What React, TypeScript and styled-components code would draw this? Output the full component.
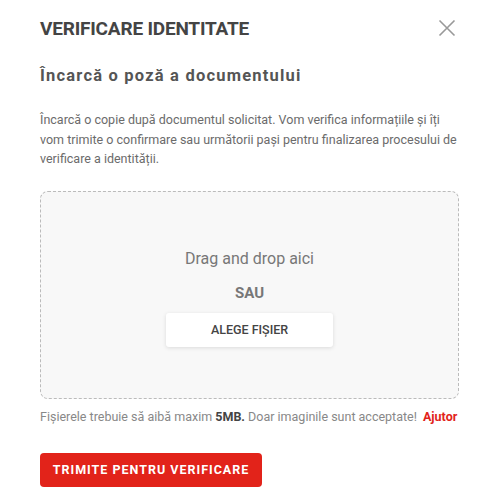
import React from 'react';
import styled, { createGlobalStyle } from 'styled-components';

const Global = createGlobalStyle`
  body {
    margin: 0;
    background: #fff;
    font-family: Roboto, "Liberation Sans", sans-serif;
  }
`;

const Modal = styled.div`
  width: 500px;
  height: 500px;
  box-sizing: border-box;
  padding: 16px 41px 0 40px;
  display: flex;
  flex-direction: column;
`;

const Header = styled.div`
  display: flex;
  align-items: center;
  justify-content: space-between;
  height: 24px;
`;

const Title = styled.h1`
  margin: 0;
  font-size: 19px;
  font-weight: 700;
  color: #444;
  letter-spacing: -0.2px;
`;

const Close = styled.button`
  border: 0;
  background: none;
  padding: 0;
  width: 18px;
  height: 18px;
  margin-right: 3px;
  display: flex;
  cursor: pointer;
`;

const Subtitle = styled.h2`
  margin: 26px 0 0;
  font-size: 16.5px;
  font-weight: 700;
  color: #555;
  letter-spacing: 1.2px;
`;

const Text = styled.p`
  margin: 25px 0 0;
  font-size: 12.5px;
  line-height: 19.5px;
  color: #6b6b6b;
`;

const Drop = styled.div`
  margin-top: 22px;
  height: 208px;
  border: 1px dashed #bbb;
  border-radius: 8px;
  background: #f8f8f8;
  display: flex;
  flex-direction: column;
  align-items: center;
  justify-content: center;
  padding-top: 6px;
  box-sizing: border-box;
`;

const DropLabel = styled.div`
  font-size: 16px;
  color: #777;
`;

const Or = styled.div`
  margin-top: 16px;
  font-size: 15px;
  font-weight: 700;
  color: #777;
`;

const Pick = styled.button`
  margin-top: 11px;
  width: 167px;
  height: 34px;
  border: 0;
  border-radius: 3px;
  background: #fff;
  box-shadow: 0 1px 4px rgba(0, 0, 0, 0.12);
  font-family: inherit;
  font-size: 12.5px;
  font-weight: 500;
  color: #444;
  cursor: pointer;
`;

const Note = styled.p`
  margin: 10px 0 0;
  font-size: 12.5px;
  color: #888;
  white-space: nowrap;

  b {
    color: #444;
  }
`;

const Help = styled.a`
  margin-left: 6px;
  color: #e2231a;
  font-weight: 700;
  text-decoration: none;
`;

const Submit = styled.button`
  margin-top: 29px;
  align-self: flex-start;
  width: 222px;
  height: 34px;
  border: 0;
  border-radius: 4px;
  background: #e2231a;
  color: #fff;
  font-family: inherit;
  font-size: 12.5px;
  font-weight: 700;
  letter-spacing: 1px;
  cursor: pointer;
`;

const App: React.FC = () => (
  <Modal>
    <Global />
    <Header>
      <Title>VERIFICARE IDENTITATE</Title>
      <Close aria-label="Închide">
        <svg width="18" height="18" viewBox="0 0 18 18">
          <path d="M1.5 1.5L16.5 16.5M16.5 1.5L1.5 16.5" stroke="#999" strokeWidth="1.6" />
        </svg>
      </Close>
    </Header>
    <Subtitle>Încarcă o poză a documentului</Subtitle>
    <Text>
      Încarcă o copie după documentul solicitat. Vom verifica informațiile și îți vom trimite o confirmare
      sau următorii pași pentru finalizarea procesului de verificare a identității.
    </Text>
    <Drop>
      <DropLabel>Drag and drop aici</DropLabel>
      <Or>SAU</Or>
      <Pick>ALEGE FIȘIER</Pick>
    </Drop>
    <Note>
      Fișierele trebuie să aibă maxim <b>5MB.</b> Doar imaginile sunt acceptate!
      <Help href="#">Ajutor</Help>
    </Note>
    <Submit>TRIMITE PENTRU VERIFICARE</Submit>
  </Modal>
);

export default App;
